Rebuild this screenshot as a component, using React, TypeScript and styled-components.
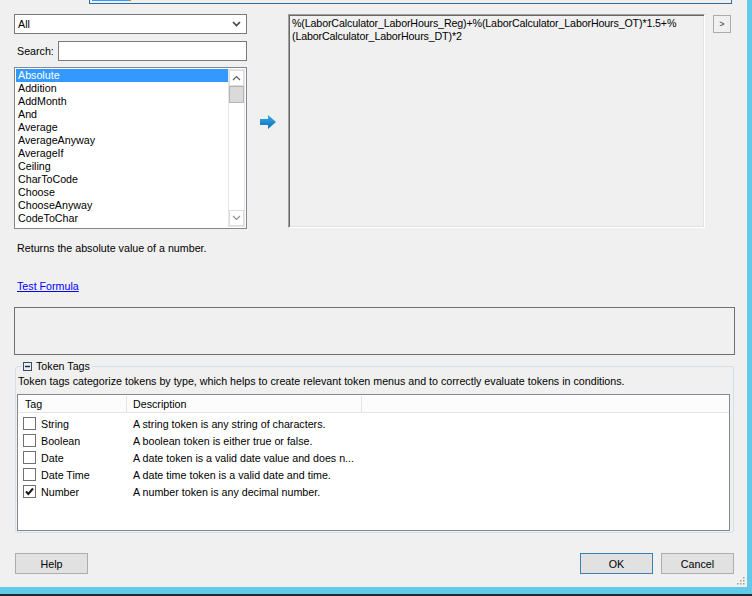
import React from 'react';
import styled, { createGlobalStyle } from 'styled-components';

const GlobalStyle = createGlobalStyle`
  html, body {
    margin: 0;
    padding: 0;
    background: #f0f0f0;
  }
  body {
    font-family: "Liberation Sans", Arial, sans-serif;
    font-size: 10.7px;
    color: #000;
  }
  * { box-sizing: border-box; }
`;

const functions = [
  'Absolute',
  'Addition',
  'AddMonth',
  'And',
  'Average',
  'AverageAnyway',
  'AverageIf',
  'Ceiling',
  'CharToCode',
  'Choose',
  'ChooseAnyway',
  'CodeToChar',
];

const tags = [
  { name: 'String', desc: 'A string token is any string of characters.', checked: false },
  { name: 'Boolean', desc: 'A boolean token is either true or false.', checked: false },
  { name: 'Date', desc: 'A date token is a valid date value and does n...', checked: false },
  { name: 'Date Time', desc: 'A date time token is a valid date and time.', checked: false },
  { name: 'Number', desc: 'A number token is any decimal number.', checked: true },
];

export default function App() {
  return (
    <>
      <GlobalStyle />
      <Screen>
        <Main>
          <Dialog>
            <TopRemnant>
              <RemnantSelection />
            </TopRemnant>

            <TopSection>
              <LeftColumn>
                <Select>
                  <span>All</span>
                  <svg width="9" height="6" viewBox="0 0 9 6">
                    <path d="M1 1 L4.5 4.5 L8 1" stroke="#404040" strokeWidth="1.6" fill="none" />
                  </svg>
                </Select>
                <SearchRow>
                  <Label>Search:</Label>
                  <TextInput />
                </SearchRow>
                <ListBox>
                  <Items>
                    {functions.map((f, i) => (
                      <Item key={f} $selected={i === 0}>
                        {f}
                      </Item>
                    ))}
                  </Items>
                  <ScrollBar>
                    <ScrollButton>
                      <svg width="9" height="6" viewBox="0 0 9 6">
                        <path d="M1 5 L4.5 1.5 L8 5" stroke="#606060" strokeWidth="1.2" fill="none" />
                      </svg>
                    </ScrollButton>
                    <Thumb />
                    <Track />
                    <ScrollButton>
                      <svg width="9" height="6" viewBox="0 0 9 6">
                        <path d="M1 1 L4.5 4.5 L8 1" stroke="#909090" strokeWidth="1.2" fill="none" />
                      </svg>
                    </ScrollButton>
                  </ScrollBar>
                </ListBox>
              </LeftColumn>

              <ArrowColumn>
                <svg width="16" height="14" viewBox="0 0 16 14">
                  <defs>
                    <linearGradient id="arrowFill" x1="0" y1="0" x2="0" y2="1">
                      <stop offset="0" stopColor="#3aa9ea" />
                      <stop offset="1" stopColor="#0a6fb5" />
                    </linearGradient>
                  </defs>
                  <path d="M0 4 H8 V0 L16 7 L8 14 V10 H0 Z" fill="url(#arrowFill)" />
                </svg>
              </ArrowColumn>

              <FormulaBox>
                %(LaborCalculator_LaborHours_Reg)+%(LaborCalculator_LaborHours_OT)*1.5+%
                <br />
                (LaborCalculator_LaborHours_DT)*2
              </FormulaBox>

              <SmallButton>&gt;</SmallButton>
            </TopSection>

            <Description>Returns the absolute value of a number.</Description>
            <Link href="#">Test Formula</Link>
            <ResultBox />

            <Group>
              <Legend>
                <svg width="9" height="9" viewBox="0 0 9 9">
                  <rect x="0.5" y="0.5" width="8" height="8" fill="#e8eef4" stroke="#3c4a5a" />
                  <path d="M2 4.5 H7" stroke="#1c2833" strokeWidth="1.4" />
                </svg>
                Token Tags
              </Legend>
              <GroupText>
                Token tags categorize tokens by type, which helps to create relevant token menus and to correctly
                evaluate tokens in conditions.
              </GroupText>
              <Table>
                <HeaderRow>
                  <HeaderCell $width={109} $pad={7}>Tag</HeaderCell>
                  <HeaderCell $width={235} $pad={6}>Description</HeaderCell>
                  <HeaderFill />
                </HeaderRow>
                <TableBody>
                  {tags.map((t) => (
                    <Row key={t.name}>
                      <TagCell>
                        <CheckBox>
                          {t.checked && (
                            <svg width="11" height="11" viewBox="0 0 11 11">
                              <path d="M2 5.5 L4.3 8 L9 2.5" stroke="#1a1a1a" strokeWidth="2" fill="none" />
                            </svg>
                          )}
                        </CheckBox>
                        {t.name}
                      </TagCell>
                      <DescCell>{t.desc}</DescCell>
                    </Row>
                  ))}
                </TableBody>
              </Table>
            </Group>

            <ButtonRow>
              <Button>Help</Button>
              <Spacer />
              <Button $default>OK</Button>
              <Button>Cancel</Button>
            </ButtonRow>

            <Grip width="9" height="9" viewBox="0 0 9 9">
              {[
                [7, 1],
                [7, 4],
                [4, 4],
                [7, 7],
                [4, 7],
                [1, 7],
              ].map(([x, y]) => (
                <rect key={`${x}_${y}`} x={x} y={y} width="1.5" height="1.5" fill="#a0a0a0" />
              ))}
            </Grip>
          </Dialog>
          <RightEdge />
        </Main>
        <BottomEdge />
        <Taskbar />
      </Screen>
    </>
  );
}

const Screen = styled.div`
  width: 752px;
  height: 596px;
  display: flex;
  flex-direction: column;
  overflow: hidden;
`;

const Main = styled.div`
  flex: 1;
  display: flex;
`;

const Dialog = styled.div`
  position: relative;
  flex: 1;
  display: flex;
  flex-direction: column;
  background: #f0f0f0;
`;

const RightEdge = styled.div`
  width: 5px;
  background: #63c9e8;
`;

const BottomEdge = styled.div`
  height: 7px;
  background: #63c9e8;
`;

const Taskbar = styled.div`
  height: 2px;
  background: #1f2a2e;
`;

const TopRemnant = styled.div`
  margin-left: 89px;
  width: 643px;
  height: 4px;
  border: 1px solid #2e6d9c;
  border-top: none;
  padding-left: 2px;
`;

const RemnantSelection = styled.div`
  width: 39px;
  height: 1px;
  background: #3399ff;
  border-right: 2px solid #e07b28;
`;

const TopSection = styled.div`
  display: flex;
  align-items: flex-start;
  margin-top: 10px;
  padding-left: 14px;
`;

const LeftColumn = styled.div`
  width: 233px;
  display: flex;
  flex-direction: column;
`;

const Select = styled.div`
  height: 20px;
  border: 1px solid #7a7a7a;
  background: #fff;
  display: flex;
  align-items: center;
  justify-content: space-between;
  padding: 0 5px 0 3px;
  line-height: 13px;
`;

const SearchRow = styled.div`
  margin-top: 7px;
  display: flex;
  align-items: center;
`;

const Label = styled.span`
  margin-left: 3px;
  width: 41px;
`;

const TextInput = styled.div`
  width: 189px;
  height: 20px;
  border: 1px solid #7a7a7a;
  background: #fff;
`;

const ListBox = styled.div`
  margin-top: 6px;
  height: 162px;
  border: 1px solid #828790;
  background: #fff;
  padding: 1px;
  display: flex;
`;

const Items = styled.div`
  flex: 1;
  display: flex;
  flex-direction: column;
`;

const Item = styled.div<{ $selected?: boolean }>`
  height: 13px;
  line-height: 13px;
  padding-left: 2px;
  white-space: nowrap;
  background: ${(p) => (p.$selected ? '#3399ff' : 'transparent')};
  color: ${(p) => (p.$selected ? '#fff' : '#000')};
`;

const ScrollBar = styled.div`
  width: 17px;
  display: flex;
  flex-direction: column;
  background: #fff;
  border: 1px solid #e6e6e6;
`;

const ScrollButton = styled.div`
  height: 16px;
  display: flex;
  align-items: center;
  justify-content: center;
  background: #fff;
  border: 1px solid #dcdcdc;
`;

const Thumb = styled.div`
  height: 17px;
  background: #dadada;
  border: 1px solid #b4b4b4;
`;

const Track = styled.div`
  flex: 1;
`;

const ArrowColumn = styled.div`
  width: 41px;
  padding: 101px 0 0 13px;
  display: flex;
`;

const FormulaBox = styled.div`
  width: 417px;
  height: 214px;
  border: 1px solid;
  border-color: #a0a0a0 #fff #fff #a0a0a0;
  box-shadow: inset 1px 1px 0 #696969, inset -1px -1px 0 #e3e3e3;
  padding: 2px 3px;
  line-height: 13px;
  background: #f0f0f0;
  white-space: nowrap;
  letter-spacing: -0.15px;
`;

const SmallButton = styled.div`
  margin: 1px 0 0 8px;
  width: 18px;
  height: 18px;
  border: 1px solid #acacac;
  color: #333;
  font-size: 9px;
  display: flex;
  align-items: center;
  justify-content: center;
`;

const Description = styled.div`
  margin-top: 13px;
  padding-left: 17px;
  line-height: 13px;
`;

const Link = styled.a`
  margin: 25px 0 0 17px;
  align-self: flex-start;
  line-height: 13px;
  color: #0000ff;
  text-decoration: underline;
`;

const ResultBox = styled.div`
  margin: 14px 0 0 14px;
  width: 721px;
  height: 48px;
  border: 1px solid #707070;
`;

const Group = styled.fieldset`
  margin: 5px 0 0 15px;
  width: 719px;
  border: 1px solid #d5dfe5;
  border-radius: 3px;
  padding: 0 3px 1px 1px;
  min-width: 0;
`;

const Legend = styled.legend`
  margin-left: 5px;
  padding: 0 2px 0 1px;
  line-height: 13px;
  display: flex;
  align-items: center;
  gap: 4px;
`;

const GroupText = styled.div`
  padding-left: 1px;
  line-height: 13px;
  margin-top: 2px;
  white-space: nowrap;
`;

const Table = styled.div`
  margin-top: 6px;
  width: 713px;
  height: 137px;
  border: 1px solid #828790;
  background: #fff;
  display: flex;
  flex-direction: column;
`;

const HeaderRow = styled.div`
  height: 18px;
  display: flex;
  background: #fcfcfc;
  border-bottom: 1px solid #e5e5e5;
  border-top: 1px solid #fff;
`;

const HeaderCell = styled.div<{ $width: number; $pad: number }>`
  width: ${(p) => p.$width}px;
  padding-left: ${(p) => p.$pad}px;
  border-right: 1px solid #e5e5e5;
  line-height: 16px;
`;

const HeaderFill = styled.div`
  flex: 1;
`;

const TableBody = styled.div`
  padding-top: 2px;
  display: flex;
  flex-direction: column;
`;

const Row = styled.div`
  height: 17px;
  display: flex;
  align-items: center;
`;

const TagCell = styled.div`
  width: 109px;
  padding-left: 5px;
  display: flex;
  align-items: center;
  gap: 5px;
`;

const CheckBox = styled.div`
  width: 13px;
  height: 13px;
  border: 1px solid #707070;
  background: #fff;
  display: flex;
  align-items: center;
  justify-content: center;
`;

const DescCell = styled.div`
  padding-left: 6px;
  white-space: nowrap;
`;

const ButtonRow = styled.div`
  margin-top: 20px;
  padding: 0 13px 0 15px;
  display: flex;
  gap: 8px;
`;

const Spacer = styled.div`
  flex: 1;
`;

const Button = styled.div<{ $default?: boolean }>`
  width: 73px;
  height: 21px;
  border: 1px solid ${(p) => (p.$default ? '#3c7fb1' : '#adadad')};
  background: #e1e1e1;
  display: flex;
  align-items: center;
  justify-content: center;
`;

const Grip = styled.svg`
  position: absolute;
  right: 2px;
  bottom: 2px;
`;
